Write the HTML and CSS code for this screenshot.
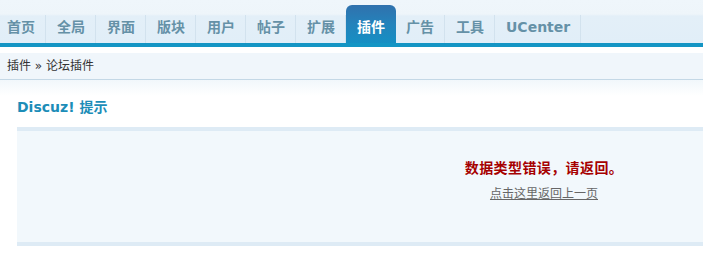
FILE: index.html
```html
<!DOCTYPE html>
<html lang="zh-CN">
<head>
<meta charset="utf-8">
<title>Discuz! 提示</title>
<link rel="stylesheet" href="styles.css">
</head>
<body>
<div class="nav">
  <ul class="menu">
    <li class="item first">首页</li>
    <li class="item">全局</li>
    <li class="item">界面</li>
    <li class="item">版块</li>
    <li class="item">用户</li>
    <li class="item">帖子</li>
    <li class="item">扩展</li>
    <li class="tab">插件</li>
    <li class="item">广告</li>
    <li class="item">工具</li>
    <li class="item">UCenter</li>
  </ul>
</div>
<div class="crumb">插件 &raquo; 论坛插件</div>
<div class="main">
  <h3 class="title">Discuz! 提示</h3>
  <div class="box">
    <p class="msg">数据类型错误，请返回。</p>
    <p class="back"><a href="#">点击这里返回上一页</a></p>
  </div>
</div>
</body>
</html>
```

FILE: styles.css
```css
html, body {
  margin: 0;
  padding: 0;
  background: #fff;
  font-family: "DejaVu Sans", "Noto Sans CJK SC", sans-serif;
}

.nav {
  height: 43px;
  background: linear-gradient(to bottom, #eff6fb 0, #eef5fa 14px, #e3eff8 16px, #e1eef8 100%);
  border-bottom: 4px solid #1495c4;
}

.menu {
  list-style: none;
  margin: 0;
  padding: 0;
  display: flex;
  align-items: flex-end;
  height: 43px;
}

.item {
  height: 28px;
  line-height: 24px;
  padding: 0 10px 0 11px;
  border-right: 1px solid #d2e2ee;
  font-size: 14px;
  font-weight: bold;
  color: #6591a7;
  white-space: nowrap;
}

.item.first {
  padding-left: 7px;
}

.tab {
  height: 38px;
  line-height: 44px;
  padding: 0 11px;
  border-radius: 6px 6px 0 0;
  background: linear-gradient(to bottom, #3071ad 0, #2483bb 50%, #168fc3 100%);
  color: #fff;
  font-size: 14px;
  font-weight: bold;
  white-space: nowrap;
}

.tab + .item {
  padding-left: 10px;
}

.crumb {
  margin-top: 6px;
  height: 26px;
  line-height: 27px;
  padding-left: 7px;
  background: #f0f6fb;
  border-bottom: 1px solid #c4d8e6;
  font-size: 12px;
  color: #333;
}

.main {
  padding: 17px 0 0 17px;
  background: linear-gradient(to bottom, #f1f7fb 0, #ffffff 16px);
}

.title {
  margin: 0;
  height: 20px;
  line-height: 20px;
  font-size: 14px;
  font-weight: bold;
  color: #1c8db8;
}

.box {
  margin-top: 10px;
  border-top: 4px solid #deebf5;
  border-bottom: 4px solid #deebf5;
  background: #f2f8fc;
  padding: 27px 0 38px 368px;
  text-align: center;
}

.msg {
  margin: 0;
  line-height: 20px;
  font-size: 14px;
  font-weight: bold;
  letter-spacing: 0.4px;
  color: #a60000;
}

.back {
  margin: 6px 0 0;
  line-height: 20px;
  font-size: 12px;
}

.back a {
  color: #666;
  text-decoration: underline;
}
```
